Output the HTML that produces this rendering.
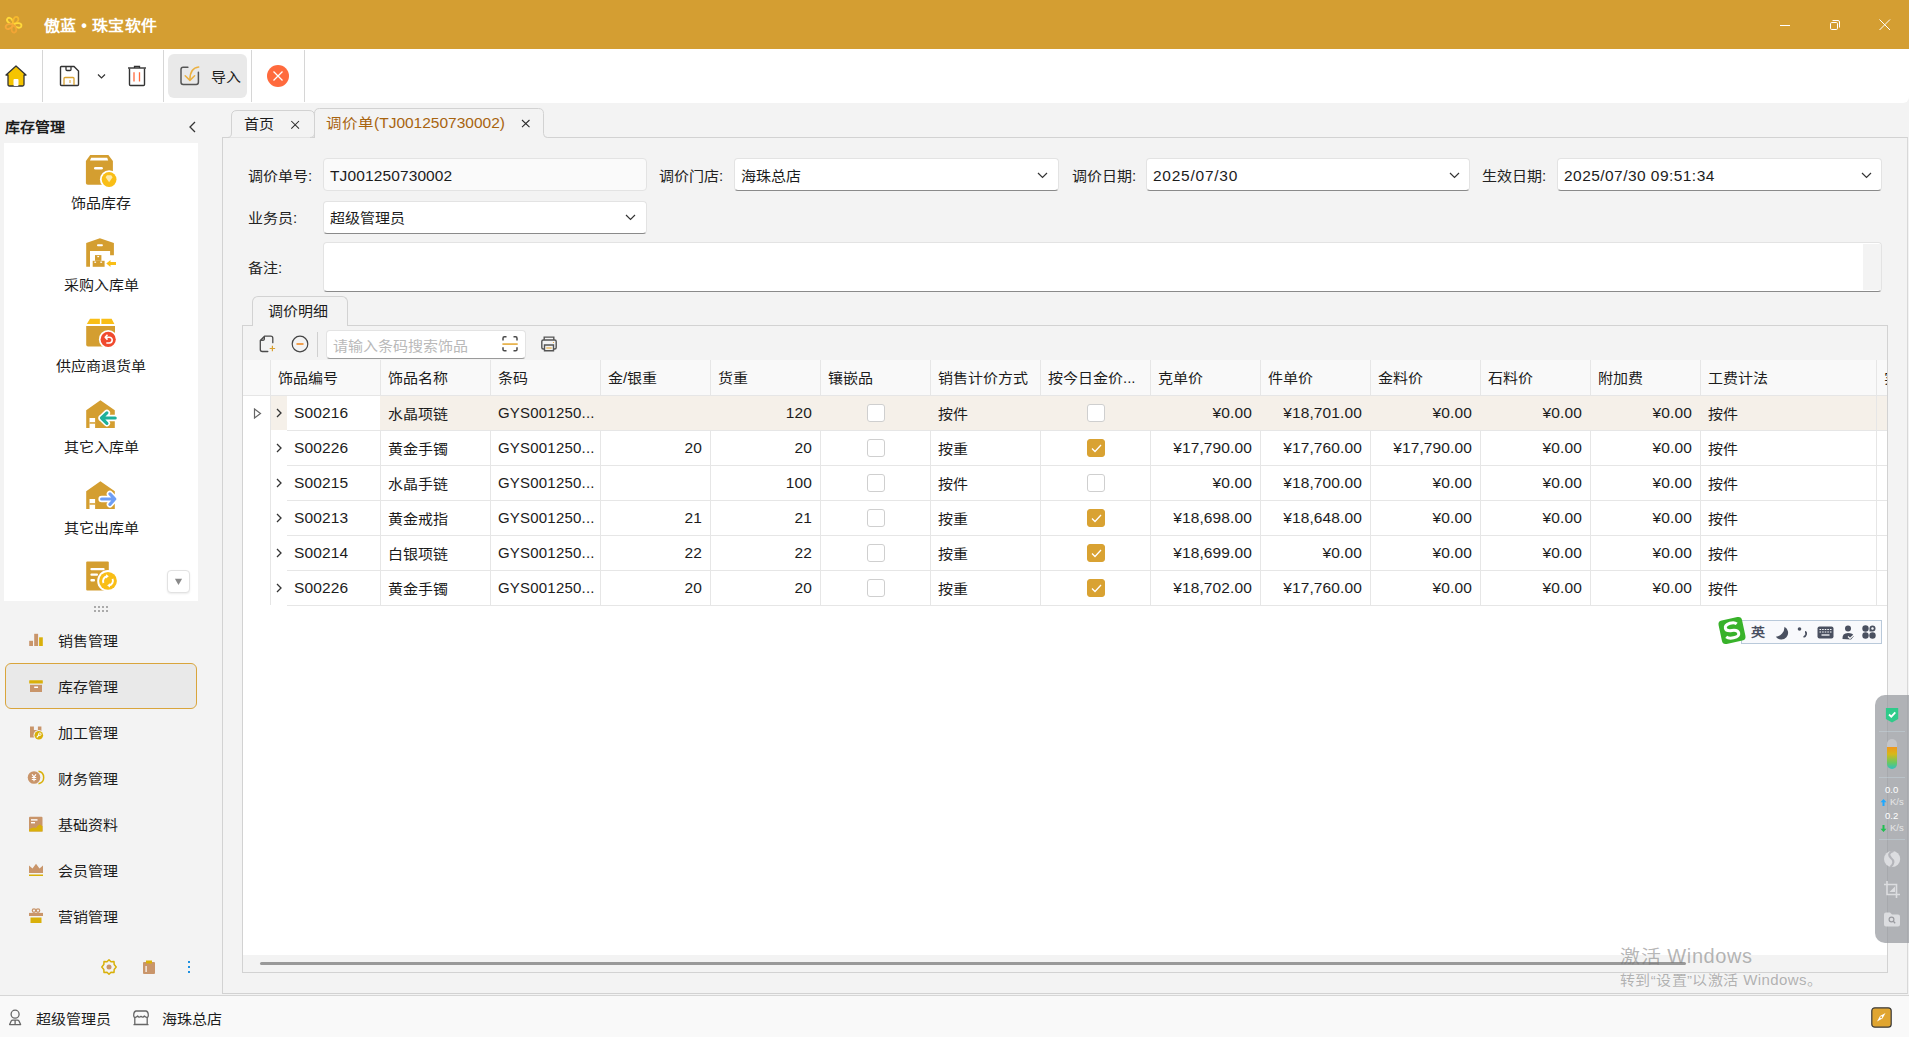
<!DOCTYPE html><html lang="zh-CN"><head><meta charset="utf-8"><title>傲蓝 • 珠宝软件</title><style>
*{box-sizing:border-box;margin:0;padding:0}
html,body{width:1909px;height:1037px;overflow:hidden}
body{position:relative;background:#f3f3f3;font-family:"Liberation Sans",sans-serif;font-size:15px;color:#1c1c1c;line-height:20px}
.a{position:absolute}
.t{position:absolute;white-space:nowrap;line-height:20px}
.n{letter-spacing:0.12px;font-size:15.5px}
.vsep{position:absolute;width:1px;background:#d6d6d6}
.inp{position:absolute;height:33px;background:#fff;border:1px solid #e3e3e3;border-bottom:1px solid #8a8a8a;border-radius:4px}
.ro{background:#fafafa;border-bottom-color:#e3e3e3}
.chev{position:absolute;width:10px;height:6px}
.cell{position:absolute;white-space:nowrap;line-height:20px;overflow:hidden}
.hl{position:absolute;height:1px;background:#e6e6e6}
.vl{position:absolute;width:1px;background:#e6e6e6}
.cb{position:absolute;width:18px;height:18px;border:1px solid #cfcfcf;border-radius:3px;background:#fff}
.cbk{background:#D9A232;border-color:#D9A232}
.c{display:inline-block;transform:translateY(0.5px) scaleY(0.89);transform-origin:50% 45%}
</style></head><body>
<div class="a" style="left:0;top:0;width:1909px;height:49px;background:#D49E32"></div>
<svg class="a" style="left:2px;top:14px" width="24" height="24" viewBox="0 0 24 24"><g transform="translate(11.3,10.4)" fill="none" stroke-width="1.8"><path d="M0,-0.5 C-3.2,-2.5 -3.8,-7.8 -0.8,-8.2 C2.4,-8.6 2.8,-3 0,-0.5" stroke="#FFD93A" transform="rotate(-38)"/><path d="M0,-0.5 C-3.2,-2.5 -3.8,-7.8 -0.8,-8.2 C2.4,-8.6 2.8,-3 0,-0.5" stroke="#F6B82E" transform="rotate(34)"/><path d="M0,-0.5 C-3.2,-2.5 -3.8,-7.8 -0.8,-8.2 C2.4,-8.6 2.8,-3 0,-0.5" stroke="#FFD93A" transform="rotate(106)"/><path d="M0,-0.5 C-3.2,-2.5 -3.8,-7.8 -0.8,-8.2 C2.4,-8.6 2.8,-3 0,-0.5" stroke="#F2A535" transform="rotate(178)"/><path d="M0,-0.5 C-3.2,-2.5 -3.8,-7.8 -0.8,-8.2 C2.4,-8.6 2.8,-3 0,-0.5" stroke="#F7A83A" transform="rotate(250)"/></g></svg>
<div class="t" style="left:44px;top:16px;font-size:16px;font-weight:bold;color:#fff;letter-spacing:0.3px"><span class="c">傲蓝</span> • <span class="c">珠宝软件</span></div>
<div class="a" style="left:1780px;top:25px;width:10px;height:1px;background:#fff"></div>
<svg class="a" style="left:1829px;top:19px" width="12" height="12" viewBox="0 0 12 12" fill="none" stroke="#fff" stroke-width="1">
<rect x="1.5" y="3.5" width="7" height="7" rx="1.2"/><path d="M3.5,1.5 h5.5 a1.5,1.5 0 0 1 1.5,1.5 v5.5"/></svg>
<svg class="a" style="left:1879px;top:19px" width="12" height="12" viewBox="0 0 12 12" stroke="#fff" stroke-width="1"><path d="M0.5,0.5 L11,11 M11,0.5 L0.5,11"/></svg>
<div class="a" style="left:0;top:49px;width:1909px;height:54px;background:#fff;border-radius:0 0 6px 0"></div>
<div class="vsep" style="left:42px;top:50px;height:52px"></div>
<div class="vsep" style="left:163px;top:50px;height:52px"></div>
<div class="vsep" style="left:251px;top:50px;height:52px"></div>
<div class="vsep" style="left:304px;top:50px;height:52px"></div>
<svg class="a" style="left:4px;top:64px" width="24" height="24" viewBox="0 0 24 24">
<path d="M2,11 L12,2 L22,11 L20,11 L20,20.5 Q20,22 18.5,22 L5.5,22 Q4,22 4,20.5 L4,11 Z" fill="#F5C400" stroke="#333" stroke-width="1.3" stroke-linejoin="round"/>
<rect x="9.5" y="15" width="5" height="7" rx="1" fill="#fff"/></svg>
<svg class="a" style="left:59px;top:65px" width="21" height="22" viewBox="0 0 21 22" fill="none">
<path d="M2,1.5 H15 L19.5,6 V19.5 Q19.5,20.5 18.5,20.5 H2.5 Q1.5,20.5 1.5,19.5 V2.5 Q1.5,1.5 2.5,1.5 Z" stroke="#333" stroke-width="1.4"/>
<path d="M7,1.5 V4.5 Q7,5.5 8,5.5 H11 Q12,5.5 12,4.5 V1.5" stroke="#333" stroke-width="1.3"/>
<path d="M5,20 V13.5 Q5,12.5 6,12.5 H14 Q15,12.5 15,13.5 V20" stroke="#D9A232" stroke-width="1.3"/>
<path d="M11,15 V18" stroke="#D9A232" stroke-width="1"/></svg>
<svg class="a" style="left:97px;top:73px" width="9" height="7" viewBox="0 0 9 7" fill="none" stroke="#333" stroke-width="1.2"><path d="M1,1.5 L4.5,5 L8,1.5"/></svg>
<svg class="a" style="left:127px;top:65px" width="20" height="22" viewBox="0 0 20 22" fill="none">
<path d="M1,3 H19" stroke="#333" stroke-width="1.4"/><path d="M7.5,3 V1.5 H12.5 V3" stroke="#333" stroke-width="1.3"/>
<path d="M2.5,3.5 V19.5 Q2.5,20.5 3.5,20.5 H16.5 Q17.5,20.5 17.5,19.5 V3.5" stroke="#333" stroke-width="1.4"/>
<path d="M7,7.3 V16.5 M12.5,7.3 V16.5" stroke="#FF6A3D" stroke-width="1.3"/></svg>
<div class="a" style="left:168px;top:54px;width:79px;height:44px;background:#e9e9e9;border-radius:6px"></div>
<svg class="a" style="left:176px;top:62px" width="28" height="28" viewBox="176 62 28 28" fill="none">
<path d="M187.9,67.3 H183.2 Q181,67.3 181,69.5 V82.2 Q181,84.4 183.2,84.4 H196.2 Q198.4,84.4 198.4,82.2 V72.3" stroke="#555" stroke-width="1.5" stroke-linecap="round"/>
<path d="M198.7,67 Q190,68 189.9,79.6" stroke="#EBB040" stroke-width="1.5" stroke-linecap="round"/><path d="M185.2,75.8 L189.9,80.4 L194.6,75.8" stroke="#EBB040" stroke-width="1.5" stroke-linecap="round" stroke-linejoin="round"/></svg>
<div class="t" style="left:211px;top:67px"><span class="c">导入</span></div>
<svg class="a" style="left:266px;top:64px" width="24" height="24" viewBox="0 0 24 24">
<circle cx="12" cy="12" r="11" fill="#FF6A3D"/><path d="M7.5,7.5 L16.5,16.5 M16.5,7.5 L7.5,16.5" stroke="#fff" stroke-width="1.3"/></svg>
<div class="t" style="left:5px;top:117px;font-weight:bold"><span class="c">库存管理</span></div>
<svg class="a" style="left:188px;top:121px" width="9" height="12" viewBox="0 0 9 12" fill="none" stroke="#333" stroke-width="1.3"><path d="M7,1 L2,6 L7,11"/></svg>
<div class="a" style="left:4px;top:143px;width:194px;height:458px;background:#fff"></div>
<div class="t" style="left:4px;width:194px;text-align:center;top:193.2px"><span class="c">饰品库存</span></div>
<div class="t" style="left:4px;width:194px;text-align:center;top:274.5px"><span class="c">采购入库单</span></div>
<div class="t" style="left:4px;width:194px;text-align:center;top:355.5px"><span class="c">供应商退货单</span></div>
<div class="t" style="left:4px;width:194px;text-align:center;top:436.5px"><span class="c">其它入库单</span></div>
<div class="t" style="left:4px;width:194px;text-align:center;top:517.5px"><span class="c">其它出库单</span></div>
<svg class="a" style="left:84px;top:152px" width="36" height="36" viewBox="84 152 36 36">
<path d="M90.2,155.1 H108.4 L112.9,161 V183 Q112.9,184.8 111,184.8 H87.8 Q85.9,184.8 85.9,183 V161 Z" fill="#D49E30"/>
<path d="M91.2,157.8 H107.2 L108.2,160.4 H90 Z" fill="#fff"/>
<rect x="94" y="167" width="8.9" height="2.6" rx="1.3" fill="#fff"/>
<circle cx="109.1" cy="179.5" r="9.2" fill="#fff"/><circle cx="109.1" cy="179.5" r="7.4" fill="#F9BE16"/>
<path d="M105.6,177.2 L107,175.3 H111.2 L112.6,177.2 L109.1,182.3 Z" fill="#fde9a8"/>
</svg>
<svg class="a" style="left:84px;top:236px" width="36" height="34" viewBox="84 236 36 34">
<path d="M86.2,243 L99.9,238.2 L113.9,243 V255.3 H110.1 V250.9 H90 V266.8 H86.2 Z" fill="#D49E30"/>
<rect x="97" y="244.3" width="5.9" height="1.9" rx="0.9" fill="#fff"/>
<rect x="95" y="255.1" width="6.4" height="5.7" fill="#D49E30"/><rect x="92.7" y="260.8" width="11.9" height="6" fill="#D49E30"/>
<rect x="97.3" y="256" width="1.8" height="1.2" fill="#fff"/><rect x="94.3" y="261.6" width="1.8" height="1.2" fill="#fff"/><rect x="100.3" y="261.6" width="1.8" height="1.2" fill="#fff"/>
<path d="M106.3,263.5 L110.5,260 V262.1 H116 V264.9 H110.5 V267 Z" fill="#F9BE16"/>
</svg>
<svg class="a" style="left:84px;top:316px" width="34" height="34" viewBox="84 316 34 34">
<path d="M90,318.8 H99.9 V323.9 H86.8 Z" fill="#F9BE16"/><path d="M101.4,318.8 H111.6 L114.4,323.9 H101.4 Z" fill="#F9BE16"/>
<path d="M86.2,326 H115 V344.8 Q115,346.6 113.2,346.6 H88 Q86.2,346.6 86.2,344.8 Z" fill="#D49E30"/>
<circle cx="108.2" cy="339.4" r="9.3" fill="#fff"/><circle cx="108.2" cy="339.4" r="7.6" fill="#F04A2E"/>
<path d="M105.5,337.2 H109.3 A2.9,2.9 0 0 1 109.3,343 H106.3" stroke="#fff" stroke-width="1.6" fill="none"/>
<path d="M107.5,334.8 L105.2,337.2 L107.5,339.6" stroke="#fff" stroke-width="1.6" fill="none" stroke-linejoin="round"/>
</svg>
<svg class="a" style="left:84px;top:398px" width="34" height="32" viewBox="84 398 34 32">
<path d="M86.2,410.3 L100.4,400.2 L114.8,410.3 V427.9 H95.1 V418 H89.5 V427.9 H86.2 Z" fill="#D49E30"/>
<rect x="89.5" y="422.2" width="5.6" height="1.5" fill="#D49E30"/>
<path d="M115.2,418 H101.5 M106.9,412.9 L101.5,418 L106.9,423.3" stroke="#fff" stroke-width="6.4" stroke-linecap="round" stroke-linejoin="round" fill="none"/>
<path d="M115.2,418 H101.5 M106.9,412.9 L101.5,418 L106.9,423.3" stroke="#1FB09A" stroke-width="3.2" stroke-linecap="round" stroke-linejoin="round" fill="none"/>
</svg>
<svg class="a" style="left:84px;top:479px" width="34" height="32" viewBox="84 479 34 32">
<path d="M86.2,491.3 L100.4,481.2 L114.8,491.3 V508.9 H95.1 V499 H89.5 V508.9 H86.2 Z" fill="#D49E30"/>
<rect x="89.5" y="503.2" width="5.6" height="1.5" fill="#D49E30"/>
<path d="M101.6,499 H114.8 M109.9,493.9 L114.8,499 L109.9,504.3" stroke="#fff" stroke-width="6.4" stroke-linecap="round" stroke-linejoin="round" fill="none"/>
<path d="M101.6,499 H114.8 M109.9,493.9 L114.8,499 L109.9,504.3" stroke="#6E9EF5" stroke-width="3.2" stroke-linecap="round" stroke-linejoin="round" fill="none"/>
</svg>
<svg class="a" style="left:84px;top:559px" width="36" height="34" viewBox="84 559 36 34">
<rect x="86.2" y="561.4" width="22.6" height="29" rx="1" fill="#D49E30"/>
<rect x="90.4" y="568" width="14.2" height="2.3" rx="1" fill="#fff"/><rect x="90.4" y="573.5" width="7.6" height="2.3" rx="1" fill="#fff"/><rect x="90.4" y="579" width="4.6" height="2.5" rx="1" fill="#fff"/>
<circle cx="108" cy="580.9" r="10.8" fill="#fff"/><circle cx="108" cy="580.9" r="8.9" fill="#F9BE16"/>
<path d="M103.5,583 A4.8,4.8 0 0 1 107,576.3" stroke="#fff" stroke-width="1.9" fill="none"/><path d="M112.5,578.8 A4.8,4.8 0 0 1 109,585.5" stroke="#fff" stroke-width="1.9" fill="none"/>
<path d="M106,574.3 L108.8,576.3 L106,578.6 Z" fill="#fff"/><path d="M110,587.5 L107.2,585.5 L110,583.2 Z" fill="#fff"/>
</svg>
<div class="a" style="left:167px;top:570px;width:23px;height:23px;background:#fff;border:1px solid #e2e2e2;border-radius:4px;box-shadow:0 1px 2px rgba(0,0,0,0.08)"></div>
<svg class="a" style="left:174px;top:578px" width="10" height="8" viewBox="0 0 10 8"><path d="M0.9,0.8 H8.1 L4.5,6.9 Z" fill="#8a8a8a"/></svg>
<svg class="a" style="left:94px;top:606px" width="14" height="6" viewBox="0 0 14 6"><rect x="0" y="0" width="2" height="2" fill="#aaa"/><rect x="0" y="4" width="2" height="2" fill="#aaa"/><rect x="4" y="0" width="2" height="2" fill="#aaa"/><rect x="4" y="4" width="2" height="2" fill="#aaa"/><rect x="8" y="0" width="2" height="2" fill="#aaa"/><rect x="8" y="4" width="2" height="2" fill="#aaa"/><rect x="12" y="0" width="2" height="2" fill="#aaa"/><rect x="12" y="4" width="2" height="2" fill="#aaa"/></svg>
<div class="a" style="left:5px;top:663px;width:192px;height:46px;background:#e9e9e9;border:1px solid #D9A53C;border-radius:6px"></div>
<div class="t" style="left:58px;top:631px"><span class="c">销售管理</span></div>
<div class="t" style="left:58px;top:677px"><span class="c">库存管理</span></div>
<div class="t" style="left:58px;top:723px"><span class="c">加工管理</span></div>
<div class="t" style="left:58px;top:769px"><span class="c">财务管理</span></div>
<div class="t" style="left:58px;top:815px"><span class="c">基础资料</span></div>
<div class="t" style="left:58px;top:861px"><span class="c">会员管理</span></div>
<div class="t" style="left:58px;top:907px"><span class="c">营销管理</span></div>
<svg class="a" style="left:28px;top:632px" width="16" height="16" viewBox="28 632 16 16"><rect x="29.2" y="640.8" width="3.8" height="5.2" fill="#C9956A"/><rect x="34.2" y="633.8" width="3.9" height="12.2" fill="#C9956A"/><rect x="39.1" y="637.3" width="3.7" height="8.7" fill="#D9B00A"/></svg>
<svg class="a" style="left:28px;top:678px" width="16" height="16" viewBox="28 678 16 16"><rect x="29.2" y="680.2" width="13.6" height="3.2" rx="0.5" fill="#D9B00A"/><rect x="30" y="684.8" width="12" height="7.2" fill="#C9956A"/><rect x="34.2" y="686.5" width="3.8" height="1.5" fill="#fff"/></svg>
<svg class="a" style="left:28px;top:724px" width="17" height="16" viewBox="28 724 17 16"><path d="M30,726.6 H33.9 V730 H37.9 V726.6 H41.4 V737.6 H30 Z" fill="#C9956A"/><circle cx="38.8" cy="735.2" r="5.3" fill="#f3f3f3"/><circle cx="38.8" cy="735.2" r="4.3" fill="#D9B00A"/><path d="M36.8,737.3 L39.3,734.7" stroke="#fff" stroke-width="1.2"/><circle cx="39.8" cy="734.2" r="1.3" fill="none" stroke="#fff" stroke-width="0.9"/></svg>
<svg class="a" style="left:27px;top:770px" width="18" height="16" viewBox="27 770 18 16"><path d="M38.5,771.3 A6.3,6.3 0 0 1 38.5,783.7" stroke="#D9B00A" stroke-width="1.5" fill="none"/><circle cx="34" cy="777.5" r="6.3" fill="#C9956A"/><path d="M32,774.3 L34,776.8 L36,774.3 M31.8,777.5 H36.2 M31.8,779.5 H36.2 M34,776.8 V781.3" stroke="#fff" stroke-width="1.1" fill="none"/></svg>
<svg class="a" style="left:28px;top:816px" width="16" height="17" viewBox="28 816 16 17"><path d="M30,816.8 H41.5 Q42.5,816.8 42.5,817.8 V831.4 H30 Q29,831.4 29,830.4 V817.8 Q29,816.8 30,816.8 Z" fill="#C9956A"/><rect x="31" y="819.2" width="6.5" height="1.4" fill="#fff"/><rect x="31" y="822" width="4" height="1.4" fill="#fff"/><path d="M29,831.4 V829.5 Q33,826.5 36,828 Q38,824 42.5,826 V831.4 Z" fill="#D9B00A"/><circle cx="39.7" cy="825.8" r="1.3" fill="#D9B00A"/></svg>
<svg class="a" style="left:28px;top:862px" width="16" height="15" viewBox="28 862 16 15"><path d="M29,872.9 V865.5 L32.5,868.5 L36,863.7 L39.5,868.5 L43,865.5 V872.9 Z" fill="#C9956A"/><rect x="29" y="874.5" width="14" height="1.5" fill="#D9B00A"/></svg>
<svg class="a" style="left:28px;top:907px" width="16" height="17" viewBox="28 907 16 17"><rect x="29" y="912.9" width="14" height="3.1" fill="#C9956A"/><circle cx="34" cy="910.6" r="1.7" stroke="#C9956A" stroke-width="1.3" fill="none"/><circle cx="38" cy="910.6" r="1.7" stroke="#C9956A" stroke-width="1.3" fill="none"/><rect x="30.5" y="917.5" width="11" height="5.5" fill="#D9B00A"/></svg>
<svg class="a" style="left:101px;top:959px" width="16" height="16" viewBox="0 0 16 16" fill="none">
<path d="M8,0.8 L10,2.8 L13,2.6 L13.2,5.6 L15.2,8 L13.2,10.4 L13,13.4 L10,13.2 L8,15.2 L6,13.2 L3,13.4 L2.8,10.4 L0.8,8 L2.8,5.6 L3,2.6 L6,2.8 Z" stroke="#D9B00A" stroke-width="1.5" stroke-linejoin="round"/>
<circle cx="8" cy="8" r="2.5" fill="#C9956A"/></svg>
<svg class="a" style="left:142px;top:960px" width="14" height="15" viewBox="0 0 14 15">
<rect x="1" y="2" width="12" height="12" rx="1" fill="#C9956A"/><rect x="4" y="0.5" width="6" height="3" fill="#D9B00A"/><rect x="3.5" y="6" width="1.2" height="6" fill="#fff"/></svg>
<svg class="a" style="left:187px;top:961px" width="4" height="12" viewBox="0 0 4 12"><rect x="1" y="0" width="2" height="2" fill="#1E90E0"/><rect x="1" y="5" width="2" height="2" fill="#1E90E0"/><rect x="1" y="10" width="2" height="2" fill="#1E90E0"/></svg>
<div class="a" style="left:222px;top:137px;width:1686px;height:857px;border:1px solid #d2d2d2;border-right-color:#d8d8d8"></div>
<svg class="a" style="left:220px;top:104px" width="340" height="36" viewBox="220 104 340 36" fill="none">
<path d="M227.5,137.5 Q231.5,137.5 231.5,133 V116 Q231.5,110.5 237,110.5 H309 Q314.5,110.5 314.5,116 V133 Q314.5,137.5 310,137.5" fill="#f3f3f3" stroke="#d2d2d2" stroke-width="1"/>
<path d="M315,139 V113.5 Q315,108.5 320,108.5 H538.5 Q543.5,108.5 543.5,113.5 V133.5 Q543.5,137.5 547.5,137.5 H560 V139 Z" fill="#f3f3f3"/>
<path d="M314.5,137 V113.5 Q314.5,108.5 319.5,108.5 H538.5 Q543.5,108.5 543.5,113.5 V133.5 Q543.5,137.5 547.5,137.5 H560" stroke="#d2d2d2" stroke-width="1"/>
</svg>
<div class="t" style="left:244px;top:114px"><span class="c">首页</span></div>
<svg class="a" style="left:290px;top:120px" width="10" height="10" viewBox="0 0 10 10" stroke="#2a2a2a" stroke-width="1.05"><path d="M1.3,1 L9,8.7 M9,1 L1.3,8.7"/></svg>
<div class="t n" style="left:326px;top:113px;color:#A8640F;letter-spacing:0px"><span class="c">调价单</span>(TJ001250730002)</div>
<svg class="a" style="left:521px;top:119px" width="10" height="10" viewBox="0 0 10 10" stroke="#2a2a2a" stroke-width="1.05"><path d="M1,1 L8.5,8.2 M8.5,1 L1,8.2"/></svg>
<div class="t" style="left:248px;top:165.5px;color:#222"><span class="c">调价单号</span>:</div>
<div class="t" style="left:659px;top:165.5px;color:#222"><span class="c">调价门店</span>:</div>
<div class="t" style="left:1072px;top:165.5px;color:#222"><span class="c">调价日期</span>:</div>
<div class="t" style="left:1482px;top:165.5px;color:#222"><span class="c">生效日期</span>:</div>
<div class="t" style="left:248px;top:207.5px;color:#222"><span class="c">业务员</span>:</div>
<div class="t" style="left:248px;top:257.5px;color:#222"><span class="c">备注</span>:</div>
<div class="inp ro" style="left:323px;top:158px;width:324px"></div>
<div class="t n" style="left:330px;top:166px">TJ001250730002</div>
<div class="inp" style="left:734px;top:158px;width:325px"></div>
<div class="t" style="left:741px;top:166px"><span class="c">海珠总店</span></div><svg class="a" style="left:1037px;top:172px" width="11" height="7" viewBox="0 0 11 7" fill="none" stroke="#333" stroke-width="1.2"><path d="M1,1 L5.5,5.5 L10,1"/></svg>
<div class="inp" style="left:1146px;top:158px;width:324px"></div>
<div class="t n" style="left:1153px;top:166px;letter-spacing:0.75px">2025/07/30</div><svg class="a" style="left:1449px;top:172px" width="11" height="7" viewBox="0 0 11 7" fill="none" stroke="#333" stroke-width="1.2"><path d="M1,1 L5.5,5.5 L10,1"/></svg>
<div class="inp" style="left:1557px;top:158px;width:325px"></div>
<div class="t n" style="left:1564px;top:166px;letter-spacing:0.45px">2025/07/30 09:51:34</div><svg class="a" style="left:1861px;top:172px" width="11" height="7" viewBox="0 0 11 7" fill="none" stroke="#333" stroke-width="1.2"><path d="M1,1 L5.5,5.5 L10,1"/></svg>
<div class="inp" style="left:323px;top:201px;width:324px;height:33px"></div>
<div class="t" style="left:330px;top:208px"><span class="c">超级管理员</span></div><svg class="a" style="left:625px;top:214px" width="11" height="7" viewBox="0 0 11 7" fill="none" stroke="#333" stroke-width="1.2"><path d="M1,1 L5.5,5.5 L10,1"/></svg>
<div class="inp" style="left:323px;top:242px;width:1559px;height:50px"></div>
<div class="a" style="left:1863px;top:244px;width:18px;height:46px;background:#f3f3f3"></div>
<div class="a" style="left:242px;top:325px;width:1646px;height:648px;border:1px solid #d2d2d2;background:#fff"></div>
<div class="a" style="left:252px;top:296px;width:96px;height:30px;border:1px solid #d2d2d2;border-bottom:none;border-radius:6px 6px 0 0;background:#f3f3f3"></div>
<div class="t" style="left:268px;top:301px"><span class="c">调价明细</span></div>
<div class="a" style="left:243px;top:326px;width:1644px;height:34px;background:#f3f3f3"></div>
<div class="a" style="left:243px;top:955px;width:1644px;height:17px;background:#f3f3f3"></div>
<div class="a" style="left:260px;top:962px;width:1426px;height:3px;background:#999;border-radius:2px"></div>
<svg class="a" style="left:258px;top:334px" width="20" height="20" viewBox="258 334 20 20" fill="none">
<path d="M272.8,342.7 V338.2 Q272.8,336.2 270.8,336.2 H264.5 L260.3,340.4 V349.5 Q260.3,351.5 262.3,351.5 H267.8" stroke="#4a4a4a" stroke-width="1.3" stroke-linecap="round" stroke-linejoin="round"/>
<path d="M264.5,336.5 V339.4 Q264.5,340.4 263.5,340.4 H260.6 Z" fill="#888" stroke="#4a4a4a" stroke-width="1"/>
<path d="M272.4,345.8 V351.2 M269.7,348.5 H275.1" stroke="#D9A030" stroke-width="1.2"/></svg>
<svg class="a" style="left:291px;top:335px" width="18" height="18" viewBox="0 0 18 18" fill="none">
<circle cx="9" cy="9" r="7.8" stroke="#444" stroke-width="1.2"/><path d="M5.5,9 H12.5" stroke="#F08A24" stroke-width="1.6"/></svg>
<div class="vsep" style="left:317px;top:332px;height:25px;background:#d0d0d0"></div>
<div class="a" style="left:326px;top:330px;width:200px;height:29px;background:#fff;border:1px solid #e3e3e3;border-bottom-color:#9a9a9a;border-radius:4px"></div>
<div class="t" style="left:333px;top:336px;color:#b9b9b9"><span class="c">请输入条码搜索饰品</span></div>
<svg class="a" style="left:500px;top:334px" width="20" height="20" viewBox="500 334 20 20" fill="none" stroke="#4a4a4a" stroke-width="1.5">
<path d="M503,340.5 V338.2 Q503,336.8 504.4,336.8 H506.5 M513.5,336.8 H515.6 Q517,336.8 517,338.2 V340.5 M517,347.2 V349.5 Q517,350.8 515.6,350.8 H513.5 M506.5,350.8 H504.4 Q503,350.8 503,349.5 V347.2"/><path d="M502.4,344.1 H517.7" stroke="#E8B450" stroke-width="1.8"/></svg>
<svg class="a" style="left:539px;top:334px" width="20" height="20" viewBox="539 334 20 20" fill="none" stroke="#555" stroke-width="1.4">
<path d="M544.2,340 V337.1 H553.8 V340"/><path d="M544.5,349 H543.3 Q541.8,349 541.8,347.5 V341.5 Q541.8,340 543.3,340 H554.7 Q556.2,340 556.2,341.5 V347.5 Q556.2,349 554.7,349 H553.5"/><path d="M544.5,345 H553.5 V350.8 H544.5 Z"/><path d="M546.3,348 H551.7" stroke="#E8B450" stroke-width="1.3"/><circle cx="553.5" cy="342.5" r="0.6" fill="#E8A030" stroke="none"/></svg>
<div class="a" style="left:243px;top:360px;width:1644px;height:35px;background:#f9f9f9"></div>
<div class="hl" style="left:243px;top:395px;width:1644px"></div>
<div class="vl" style="left:270px;top:360px;height:245px"></div>
<div class="vl" style="left:380px;top:360px;height:245px"></div>
<div class="vl" style="left:490px;top:360px;height:245px"></div>
<div class="vl" style="left:600px;top:360px;height:245px"></div>
<div class="vl" style="left:710px;top:360px;height:245px"></div>
<div class="vl" style="left:820px;top:360px;height:245px"></div>
<div class="vl" style="left:930px;top:360px;height:245px"></div>
<div class="vl" style="left:1040px;top:360px;height:245px"></div>
<div class="vl" style="left:1150px;top:360px;height:245px"></div>
<div class="vl" style="left:1260px;top:360px;height:245px"></div>
<div class="vl" style="left:1370px;top:360px;height:245px"></div>
<div class="vl" style="left:1480px;top:360px;height:245px"></div>
<div class="vl" style="left:1590px;top:360px;height:245px"></div>
<div class="vl" style="left:1700px;top:360px;height:245px"></div>
<div class="vl" style="left:1876px;top:360px;height:245px"></div>
<div class="cell" style="left:278px;top:368px"><span class="c">饰品编号</span></div>
<div class="cell" style="left:388px;top:368px"><span class="c">饰品名称</span></div>
<div class="cell" style="left:498px;top:368px"><span class="c">条码</span></div>
<div class="cell" style="left:608px;top:368px"><span class="c">金</span>/<span class="c">银重</span></div>
<div class="cell" style="left:718px;top:368px"><span class="c">货重</span></div>
<div class="cell" style="left:828px;top:368px"><span class="c">镶嵌品</span></div>
<div class="cell" style="left:938px;top:368px"><span class="c">销售计价方式</span></div>
<div class="cell" style="left:1048px;top:368px"><span class="c">按今日金价</span>...</div>
<div class="cell" style="left:1158px;top:368px"><span class="c">克单价</span></div>
<div class="cell" style="left:1268px;top:368px"><span class="c">件单价</span></div>
<div class="cell" style="left:1378px;top:368px"><span class="c">金料价</span></div>
<div class="cell" style="left:1488px;top:368px"><span class="c">石料价</span></div>
<div class="cell" style="left:1598px;top:368px"><span class="c">附加费</span></div>
<div class="cell" style="left:1708px;top:368px"><span class="c">工费计法</span></div>
<div class="cell" style="left:1884px;top:368px;width:3px"><span class="c">实</span></div>
<div class="a" style="left:271px;top:396px;width:1605px;height:34px;background:#F5F0E9"></div>
<div class="a" style="left:1877px;top:396px;width:10px;height:34px;background:#F5F0E9"></div>
<div class="a" style="left:287px;top:396px;width:93px;height:34px;background:#fff"></div>
<div class="hl" style="left:287px;top:430px;width:1600px"></div>
<svg class="a" style="left:275px;top:408px" width="8" height="10" viewBox="0 0 8 10" fill="none" stroke="#333" stroke-width="1.3"><path d="M2,1 L6,5 L2,9"/></svg>
<div class="cell n" style="left:294px;top:403px">S00216</div>
<div class="cell" style="left:388px;top:404px"><span class="c">水晶项链</span></div>
<div class="cell" style="left:498px;top:403px;letter-spacing:0.2px">GYS001250...</div>
<div class="cell n" style="left:711px;width:101px;text-align:right;top:403px">120</div>
<div class="cb" style="left:867px;top:404px"></div>
<div class="cell" style="left:938px;top:404px"><span class="c">按件</span></div>
<div class="cb" style="left:1087px;top:404px"></div>
<div class="cell n" style="left:1151px;width:101px;text-align:right;top:403px">¥0.00</div>
<div class="cell n" style="left:1261px;width:101px;text-align:right;top:403px">¥18,701.00</div>
<div class="cell n" style="left:1371px;width:101px;text-align:right;top:403px">¥0.00</div>
<div class="cell n" style="left:1481px;width:101px;text-align:right;top:403px">¥0.00</div>
<div class="cell n" style="left:1591px;width:101px;text-align:right;top:403px">¥0.00</div>
<div class="cell" style="left:1708px;top:404px"><span class="c">按件</span></div>
<div class="hl" style="left:287px;top:465px;width:1600px"></div>
<svg class="a" style="left:275px;top:443px" width="8" height="10" viewBox="0 0 8 10" fill="none" stroke="#333" stroke-width="1.3"><path d="M2,1 L6,5 L2,9"/></svg>
<div class="cell n" style="left:294px;top:438px">S00226</div>
<div class="cell" style="left:388px;top:439px"><span class="c">黄金手镯</span></div>
<div class="cell" style="left:498px;top:438px;letter-spacing:0.2px">GYS001250...</div>
<div class="cell n" style="left:601px;width:101px;text-align:right;top:438px">20</div>
<div class="cell n" style="left:711px;width:101px;text-align:right;top:438px">20</div>
<div class="cb" style="left:867px;top:439px"></div>
<div class="cell" style="left:938px;top:439px"><span class="c">按重</span></div>
<div class="cb cbk" style="left:1087px;top:439px"><svg style="position:absolute;left:3px;top:4px" width="11" height="9" viewBox="0 0 11 9" fill="none" stroke="#fff" stroke-width="1.3"><path d="M1,4.5 L4,7.5 L10,1"/></svg></div>
<div class="cell n" style="left:1151px;width:101px;text-align:right;top:438px">¥17,790.00</div>
<div class="cell n" style="left:1261px;width:101px;text-align:right;top:438px">¥17,760.00</div>
<div class="cell n" style="left:1371px;width:101px;text-align:right;top:438px">¥17,790.00</div>
<div class="cell n" style="left:1481px;width:101px;text-align:right;top:438px">¥0.00</div>
<div class="cell n" style="left:1591px;width:101px;text-align:right;top:438px">¥0.00</div>
<div class="cell" style="left:1708px;top:439px"><span class="c">按件</span></div>
<div class="hl" style="left:287px;top:500px;width:1600px"></div>
<svg class="a" style="left:275px;top:478px" width="8" height="10" viewBox="0 0 8 10" fill="none" stroke="#333" stroke-width="1.3"><path d="M2,1 L6,5 L2,9"/></svg>
<div class="cell n" style="left:294px;top:473px">S00215</div>
<div class="cell" style="left:388px;top:474px"><span class="c">水晶手链</span></div>
<div class="cell" style="left:498px;top:473px;letter-spacing:0.2px">GYS001250...</div>
<div class="cell n" style="left:711px;width:101px;text-align:right;top:473px">100</div>
<div class="cb" style="left:867px;top:474px"></div>
<div class="cell" style="left:938px;top:474px"><span class="c">按件</span></div>
<div class="cb" style="left:1087px;top:474px"></div>
<div class="cell n" style="left:1151px;width:101px;text-align:right;top:473px">¥0.00</div>
<div class="cell n" style="left:1261px;width:101px;text-align:right;top:473px">¥18,700.00</div>
<div class="cell n" style="left:1371px;width:101px;text-align:right;top:473px">¥0.00</div>
<div class="cell n" style="left:1481px;width:101px;text-align:right;top:473px">¥0.00</div>
<div class="cell n" style="left:1591px;width:101px;text-align:right;top:473px">¥0.00</div>
<div class="cell" style="left:1708px;top:474px"><span class="c">按件</span></div>
<div class="hl" style="left:287px;top:535px;width:1600px"></div>
<svg class="a" style="left:275px;top:513px" width="8" height="10" viewBox="0 0 8 10" fill="none" stroke="#333" stroke-width="1.3"><path d="M2,1 L6,5 L2,9"/></svg>
<div class="cell n" style="left:294px;top:508px">S00213</div>
<div class="cell" style="left:388px;top:509px"><span class="c">黄金戒指</span></div>
<div class="cell" style="left:498px;top:508px;letter-spacing:0.2px">GYS001250...</div>
<div class="cell n" style="left:601px;width:101px;text-align:right;top:508px">21</div>
<div class="cell n" style="left:711px;width:101px;text-align:right;top:508px">21</div>
<div class="cb" style="left:867px;top:509px"></div>
<div class="cell" style="left:938px;top:509px"><span class="c">按重</span></div>
<div class="cb cbk" style="left:1087px;top:509px"><svg style="position:absolute;left:3px;top:4px" width="11" height="9" viewBox="0 0 11 9" fill="none" stroke="#fff" stroke-width="1.3"><path d="M1,4.5 L4,7.5 L10,1"/></svg></div>
<div class="cell n" style="left:1151px;width:101px;text-align:right;top:508px">¥18,698.00</div>
<div class="cell n" style="left:1261px;width:101px;text-align:right;top:508px">¥18,648.00</div>
<div class="cell n" style="left:1371px;width:101px;text-align:right;top:508px">¥0.00</div>
<div class="cell n" style="left:1481px;width:101px;text-align:right;top:508px">¥0.00</div>
<div class="cell n" style="left:1591px;width:101px;text-align:right;top:508px">¥0.00</div>
<div class="cell" style="left:1708px;top:509px"><span class="c">按件</span></div>
<div class="hl" style="left:287px;top:570px;width:1600px"></div>
<svg class="a" style="left:275px;top:548px" width="8" height="10" viewBox="0 0 8 10" fill="none" stroke="#333" stroke-width="1.3"><path d="M2,1 L6,5 L2,9"/></svg>
<div class="cell n" style="left:294px;top:543px">S00214</div>
<div class="cell" style="left:388px;top:544px"><span class="c">白银项链</span></div>
<div class="cell" style="left:498px;top:543px;letter-spacing:0.2px">GYS001250...</div>
<div class="cell n" style="left:601px;width:101px;text-align:right;top:543px">22</div>
<div class="cell n" style="left:711px;width:101px;text-align:right;top:543px">22</div>
<div class="cb" style="left:867px;top:544px"></div>
<div class="cell" style="left:938px;top:544px"><span class="c">按重</span></div>
<div class="cb cbk" style="left:1087px;top:544px"><svg style="position:absolute;left:3px;top:4px" width="11" height="9" viewBox="0 0 11 9" fill="none" stroke="#fff" stroke-width="1.3"><path d="M1,4.5 L4,7.5 L10,1"/></svg></div>
<div class="cell n" style="left:1151px;width:101px;text-align:right;top:543px">¥18,699.00</div>
<div class="cell n" style="left:1261px;width:101px;text-align:right;top:543px">¥0.00</div>
<div class="cell n" style="left:1371px;width:101px;text-align:right;top:543px">¥0.00</div>
<div class="cell n" style="left:1481px;width:101px;text-align:right;top:543px">¥0.00</div>
<div class="cell n" style="left:1591px;width:101px;text-align:right;top:543px">¥0.00</div>
<div class="cell" style="left:1708px;top:544px"><span class="c">按件</span></div>
<div class="hl" style="left:287px;top:605px;width:1600px"></div>
<svg class="a" style="left:275px;top:583px" width="8" height="10" viewBox="0 0 8 10" fill="none" stroke="#333" stroke-width="1.3"><path d="M2,1 L6,5 L2,9"/></svg>
<div class="cell n" style="left:294px;top:578px">S00226</div>
<div class="cell" style="left:388px;top:579px"><span class="c">黄金手镯</span></div>
<div class="cell" style="left:498px;top:578px;letter-spacing:0.2px">GYS001250...</div>
<div class="cell n" style="left:601px;width:101px;text-align:right;top:578px">20</div>
<div class="cell n" style="left:711px;width:101px;text-align:right;top:578px">20</div>
<div class="cb" style="left:867px;top:579px"></div>
<div class="cell" style="left:938px;top:579px"><span class="c">按重</span></div>
<div class="cb cbk" style="left:1087px;top:579px"><svg style="position:absolute;left:3px;top:4px" width="11" height="9" viewBox="0 0 11 9" fill="none" stroke="#fff" stroke-width="1.3"><path d="M1,4.5 L4,7.5 L10,1"/></svg></div>
<div class="cell n" style="left:1151px;width:101px;text-align:right;top:578px">¥18,702.00</div>
<div class="cell n" style="left:1261px;width:101px;text-align:right;top:578px">¥17,760.00</div>
<div class="cell n" style="left:1371px;width:101px;text-align:right;top:578px">¥0.00</div>
<div class="cell n" style="left:1481px;width:101px;text-align:right;top:578px">¥0.00</div>
<div class="cell n" style="left:1591px;width:101px;text-align:right;top:578px">¥0.00</div>
<div class="cell" style="left:1708px;top:579px"><span class="c">按件</span></div>
<svg class="a" style="left:253px;top:408px" width="9" height="11" viewBox="0 0 9 11" fill="none" stroke="#666" stroke-width="1.2"><path d="M1.5,1 L7.5,5.5 L1.5,10 Z"/></svg>
<div class="a" style="left:1741px;top:620px;width:141px;height:24px;background:#f8f9fc;border:1px solid #b9c9da"></div>
<svg class="a" style="left:1717px;top:616px" width="30" height="29" viewBox="0 0 30 29">
<g transform="rotate(-12 15 14.5)"><rect x="3" y="2.5" width="24" height="24" rx="4" fill="#38B22A"/>
<path d="M21,9 Q19,6.5 14.5,7 Q9,7.5 9,11 Q9,14 15,14.5 Q21,15 21,18.5 Q21,22 15,22 Q10,22 8,19.5" stroke="#fff" stroke-width="3" fill="none"/></g></svg>
<div class="t" style="left:1751px;top:622px;font-size:14px;font-weight:bold;color:#4a5060"><span class="c">英</span></div>
<svg class="a" style="left:1775px;top:626px" width="14" height="14" viewBox="0 0 14 14"><path d="M9.5,0.8 A6.8,6.8 0 1 1 0.8,10.8 A10,10 0 0 0 9.5,0.8 Z" fill="#4a5060"/></svg>
<svg class="a" style="left:1797px;top:626px" width="11" height="12" viewBox="0 0 11 12"><circle cx="2.5" cy="3" r="1.8" fill="#4a5060"/><path d="M8,6 Q9.5,6 9,8.5 Q8.5,10.5 6.5,11" stroke="#4a5060" stroke-width="1.8" fill="none"/></svg>
<svg class="a" style="left:1817px;top:626px" width="17" height="13" viewBox="0 0 17 13"><rect x="0.5" y="0.5" width="16" height="12" rx="2" fill="#4a5060"/><path d="M2.5,3.5 H14.5 M2.5,6 H14.5" stroke="#f8f9fc" stroke-width="1.2" stroke-dasharray="1.6 1"/><path d="M4.5,9 H12.5" stroke="#f8f9fc" stroke-width="1.3"/></svg>
<svg class="a" style="left:1842px;top:625px" width="14" height="15" viewBox="0 0 14 15"><circle cx="6" cy="3.5" r="3" fill="#4a5060"/><path d="M0.5,14 Q0,8 6,8 Q11,8 12,11 L9,14.5 Z" fill="#4a5060"/><path d="M6,11.5 L8,13.5 L13,9" stroke="#fff" stroke-width="1.2" fill="none"/></svg>
<svg class="a" style="left:1862px;top:625px" width="14" height="14" viewBox="0 0 14 14"><circle cx="3.5" cy="3.5" r="3.2" fill="#4a5060"/><circle cx="3.5" cy="10.5" r="3.2" fill="#4a5060"/><circle cx="10.5" cy="10.5" r="3.2" fill="#4a5060"/><path d="M7.5,3.5 A3,3 0 1 1 10.5,6.5 L7.5,6.5 Z" fill="#4a5060"/><circle cx="10.5" cy="3.5" r="1.2" fill="#f8f9fc"/></svg>
<div class="a" style="left:1875px;top:695px;width:40px;height:248px;background:rgba(150,152,158,0.72);border-radius:10px 0 0 10px"></div>
<svg class="a" style="left:1885px;top:707px" width="14" height="17" viewBox="1885 707 14 17"><path d="M1885.9,708 H1898.2 V719 L1892,722.6 L1885.9,719 Z" fill="#2FCB8A"/><path d="M1889,714.5 L1891.3,716.7 L1895.3,712.3" stroke="#fff" stroke-width="1.8" fill="none"/></svg>
<div class="a" style="left:1879px;top:731px;width:26px;height:1px;background:rgba(200,215,225,0.45)"></div>
<div class="a" style="left:1879px;top:777px;width:26px;height:1px;background:rgba(200,215,225,0.45)"></div>
<div class="a" style="left:1879px;top:839px;width:26px;height:1px;background:rgba(200,215,225,0.45)"></div>
<div class="a" style="left:1887px;top:739px;width:10px;height:30px;border-radius:5px;background:linear-gradient(#c4c5c9 0 26%,#F0961E 26%,#D8B818 50%,#6CC860 78%,#30C0C0)"></div>
<div class="t" style="left:1885px;top:784px;font-size:9.5px;line-height:12px;color:#fff">0.0</div>
<div class="t" style="left:1890px;top:796px;font-size:9.5px;line-height:12px;color:#e6e6e6">K/s</div><svg class="a" style="left:1880px;top:799px" width="7" height="7" viewBox="0 0 7 7"><path d="M3.5,0 L6.5,3.3 H4.5 V7 H2.5 V3.3 H0.5 Z" fill="#1EA8FF"/></svg>
<div class="t" style="left:1885px;top:810px;font-size:9.5px;line-height:12px;color:#fff">0.2</div>
<div class="t" style="left:1890px;top:822px;font-size:9.5px;line-height:12px;color:#e6e6e6">K/s</div><svg class="a" style="left:1880px;top:825px" width="7" height="7" viewBox="0 0 7 7"><path d="M3.5,7 L6.5,3.7 H4.5 V0 H2.5 V3.7 H0.5 Z" fill="#20C050"/></svg>
<svg class="a" style="left:1883px;top:850px" width="18" height="18" viewBox="1883 850 18 18"><circle cx="1892.1" cy="859" r="8.1" fill="#dcdde0"/><path d="M1893.5,851 Q1886.5,853.5 1891,858 Q1896,862 1890.5,867" stroke="#b4b5ba" stroke-width="2.2" fill="none"/></svg>
<svg class="a" style="left:1883px;top:880px" width="18" height="19" viewBox="1883 880 18 19" fill="none" stroke="#dcdde0" stroke-width="1.6"><path d="M1887,881 V894.5 H1900 M1884,884.5 H1896.5 V898"/><path d="M1889.5,892 L1895,886.5 V892 Z" fill="#dcdde0" stroke="none"/></svg>
<svg class="a" style="left:1883px;top:912px" width="18" height="15" viewBox="1883 912 18 15"><path d="M1884,914.6 Q1884,912.6 1886,912.6 H1890 L1892,914.6 H1898 Q1900,914.6 1900,916.6 V924.5 Q1900,926.5 1898,926.5 H1886 Q1884,926.5 1884,924.5 Z" fill="#dcdde0"/><circle cx="1891.5" cy="919.5" r="2.4" stroke="#9a9ba0" stroke-width="1.2" fill="none"/><path d="M1893.3,921.3 L1895.2,923.2" stroke="#9a9ba0" stroke-width="1.3"/></svg>
<div class="t" style="left:1620px;top:943px;font-size:20px;line-height:26px;letter-spacing:0.6px;color:rgba(120,120,120,0.55)"><span class="c">激活</span> Windows</div>
<div class="t" style="left:1620px;top:970px;font-size:15px;line-height:20px;letter-spacing:0.4px;color:rgba(120,120,120,0.55)"><span class="c">转到“设置”以激活</span> Windows<span class="c">。</span></div>
<div class="a" style="left:0;top:995px;width:1909px;height:42px;background:#f9f9f9;border-top:1px solid #d6d6d6"></div>
<svg class="a" style="left:6px;top:1008px" width="18" height="20" viewBox="6 1008 18 20" fill="none" stroke="#666" stroke-width="1.3"><circle cx="15.1" cy="1014.2" r="4"/><path d="M9.6,1024.6 L11.2,1021 Q11.7,1020.2 12.8,1020.2 H17.4 Q18.5,1020.2 19,1021 L20.6,1024.6 Z M15.1,1020.2 V1024.6" stroke-linejoin="round"/></svg>
<div class="t" style="left:36px;top:1009px"><span class="c">超级管理员</span></div>
<svg class="a" style="left:131px;top:1008px" width="20" height="20" viewBox="131 1008 20 20" fill="none" stroke="#666" stroke-width="1.3" stroke-linejoin="round"><path d="M136,1011 H146 Q148.3,1011.5 148.3,1015.5 Q148.3,1017.5 146.5,1017.3 Q145,1017 144.5,1016 Q143,1018 141,1016.3 Q139,1018 137.5,1016 Q137,1017 135.5,1017.3 Q133.7,1017.5 133.7,1015.5 Q133.7,1011.5 136,1011 Z"/><path d="M134.8,1017.5 V1024.5 H147.2 V1017.5 M133.5,1024.6 H148.5"/></svg>
<div class="t" style="left:162px;top:1009px"><span class="c">海珠总店</span></div>
<svg class="a" style="left:1871px;top:1007px" width="21" height="21" viewBox="0 0 21 21"><rect x="0.8" y="0.8" width="19.4" height="19.4" rx="3" fill="#E0A530" stroke="#3a3a3a" stroke-width="1.2"/><path d="M14.5,6 L9,9 L6,14.5 L11.5,11.5 Z" fill="#fff"/><circle cx="10.2" cy="10.2" r="1" fill="#E0A530"/></svg>
</body></html>
